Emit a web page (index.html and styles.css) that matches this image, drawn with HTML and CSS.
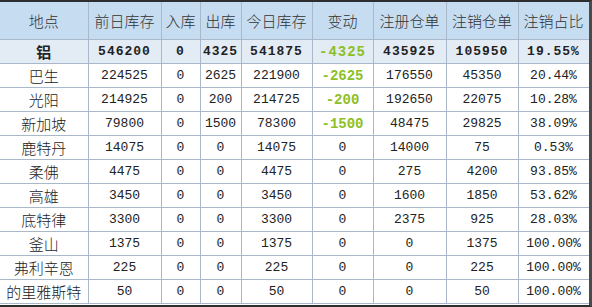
FILE: index.html
```html
<!DOCTYPE html>
<html lang="zh">
<head>
<meta charset="utf-8">
<link rel="stylesheet" href="styles.css">
</head>
<body>
<div class="frame">
<table class="stock">
<colgroup>
<col class="c1"><col class="c2"><col class="c3"><col class="c4"><col class="c5"><col class="c6"><col class="c7"><col class="c8"><col class="c9">
</colgroup>
<thead>
<tr><th>地点</th><th>前日库存</th><th>入库</th><th>出库</th><th>今日库存</th><th>变动</th><th>注册仓单</th><th>注销仓单</th><th>注销占比</th></tr>
</thead>
<tbody>
<tr class="total"><td class="name">铝</td><td>546200</td><td>0</td><td>4325</td><td>541875</td><td class="down">-4325</td><td>435925</td><td>105950</td><td>19.55%</td></tr>
<tr><td class="name">巴生</td><td>224525</td><td>0</td><td>2625</td><td>221900</td><td class="down">-2625</td><td>176550</td><td>45350</td><td>20.44%</td></tr>
<tr><td class="name">光阳</td><td>214925</td><td>0</td><td>200</td><td>214725</td><td class="down">-200</td><td>192650</td><td>22075</td><td>10.28%</td></tr>
<tr><td class="name">新加坡</td><td>79800</td><td>0</td><td>1500</td><td>78300</td><td class="down">-1500</td><td>48475</td><td>29825</td><td>38.09%</td></tr>
<tr><td class="name">鹿特丹</td><td>14075</td><td>0</td><td>0</td><td>14075</td><td>0</td><td>14000</td><td>75</td><td>0.53%</td></tr>
<tr><td class="name">柔佛</td><td>4475</td><td>0</td><td>0</td><td>4475</td><td>0</td><td>275</td><td>4200</td><td>93.85%</td></tr>
<tr><td class="name">高雄</td><td>3450</td><td>0</td><td>0</td><td>3450</td><td>0</td><td>1600</td><td>1850</td><td>53.62%</td></tr>
<tr><td class="name">底特律</td><td>3300</td><td>0</td><td>0</td><td>3300</td><td>0</td><td>2375</td><td>925</td><td>28.03%</td></tr>
<tr><td class="name">釜山</td><td>1375</td><td>0</td><td>0</td><td>1375</td><td>0</td><td>0</td><td>1375</td><td>100.00%</td></tr>
<tr><td class="name">弗利辛恩</td><td>225</td><td>0</td><td>0</td><td>225</td><td>0</td><td>0</td><td>225</td><td>100.00%</td></tr>
<tr><td class="name">的里雅斯特</td><td>50</td><td>0</td><td>0</td><td>50</td><td>0</td><td>0</td><td>50</td><td>100.00%</td></tr>
</tbody>
</table>
</div>
</body>
</html>
```
FILE: styles.css
```css
html, body {
  margin: 0;
  padding: 0;
  background: #ffffff;
}
.frame {
  width: 589px;
  height: 303px;
  border-top: 2px solid #2e2e2e;
  border-right: 3px solid #4a4a4a;
  border-bottom: 2px solid #2e2e2e;
  overflow: hidden;
  background: #ffffff;
}
.stock {
  width: 589px;
  table-layout: fixed;
  border-collapse: collapse;
  font-family: "Liberation Mono", "Noto Sans CJK SC", monospace;
  font-size: 13px;
  color: #222;
}
.c1 { width: 88px; }
.c2 { width: 73px; }
.c3 { width: 39px; }
.c4 { width: 41px; }
.c5 { width: 71px; }
.c6 { width: 61px; }
.c7 { width: 73px; }
.c8 { width: 72px; }
.c9 { width: 71px; }
.stock th, .stock td {
  border: 1px solid #a9b9ca;
  text-align: center;
  padding: 0;
  white-space: nowrap;
  overflow: hidden;
}
.stock tr:first-child th { border-top: none; }
.stock th:first-child, .stock td:first-child { border-left: none; }
.stock thead th {
  height: 37px;
  background: #c5dcf1;
  font-family: "Noto Sans CJK SC", sans-serif;
  font-weight: 300;
  font-size: 15px;
  color: #333;
}
.stock tbody td {
  height: 23px;
}
.stock td.name {
  font-family: "Noto Sans CJK SC", sans-serif;
  font-weight: 300;
  font-size: 15px;
  color: #222;
}
.stock tr.total td {
  background: #e3ecf5;
  font-weight: bold;
  letter-spacing: 1px;
  color: #222;
}
.stock tr.total td.name {
  letter-spacing: 0;
  font-weight: bold;
}
.stock td.down,
.stock tr.total td.down {
  color: #8cc026;
  font-weight: bold;
  font-size: 14px;
}
```
